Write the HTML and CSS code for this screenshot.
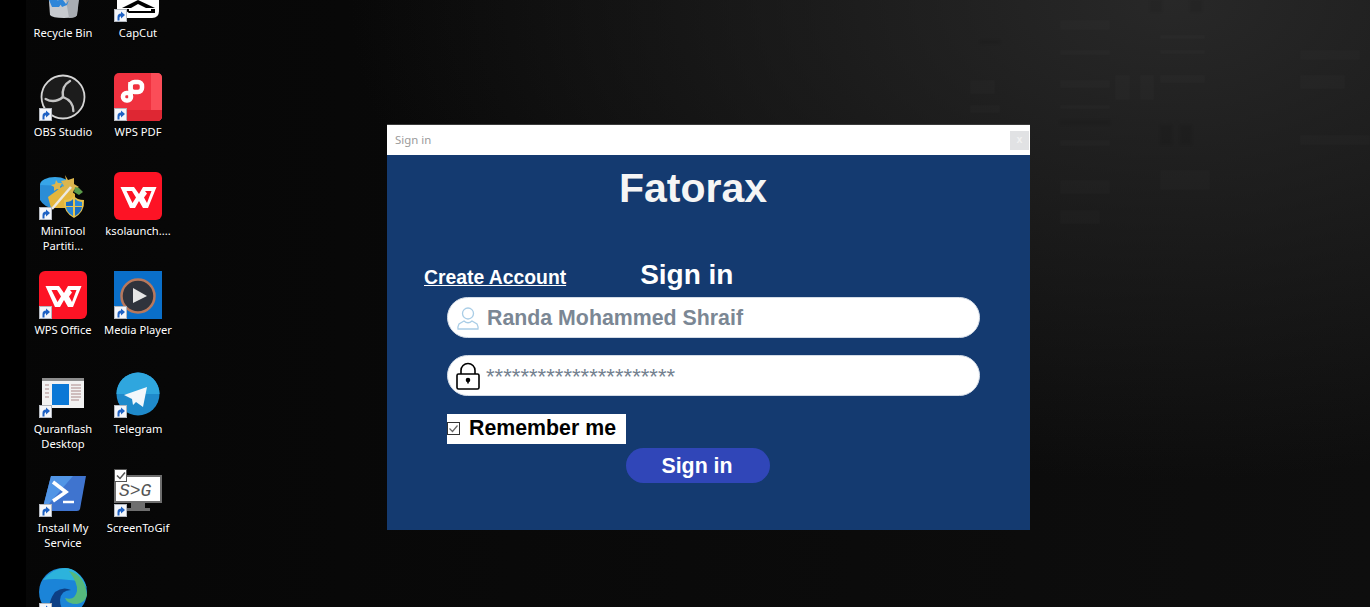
FILE: index.html
```html
<!DOCTYPE html>
<html lang="en">
<head>
<meta charset="utf-8">
<title>Sign in</title>
<link rel="stylesheet" href="styles.css">
</head>
<body>
<svg class="defs" width="0" height="0" aria-hidden="true">
  <symbol id="sc" viewBox="0 0 13 13">
    <rect x=".5" y=".5" width="12" height="12" fill="#f4f6fa" stroke="#b4b8bf"/>
    <path d="M3.500 11.500V8q0-3.500 3.500-3.500V2.500L11 6 7 9.500V7.200q-1.500 0-1.500 1.500v2.800z" fill="#1f62c4"/>
  </symbol>
  <symbol id="wps" viewBox="0 0 48 48">
    <rect width="48" height="48" rx="6" fill="#fd1325"/>
    <path d="M6.500 15H20l5 7 4-7h13.500L34 36h-5l-4-7-4 7h-5z" fill="#fff"/>
    <path d="M12.500 19H18l4 6.500-3.500 5.500zM31 19h6.500L33 31l-3-5.500 3-4z" fill="#fd1325"/>
  </symbol>
</svg>
<main class="desktop">
  <svg class="wallpaper-art" width="1370" height="607" viewBox="0 0 1370 607" aria-hidden="true">
    <g fill="#ffffff" opacity="0.016">
      <rect x="1060" y="20" width="50" height="10"/><rect x="1160" y="35" width="45" height="4"/><rect x="1160" y="50" width="45" height="4"/>
      <rect x="1060" y="50" width="50" height="5"/><rect x="1060" y="80" width="50" height="8"/><rect x="1115" y="75" width="15" height="25"/>
      <rect x="1140" y="75" width="14" height="25"/><rect x="1160" y="75" width="45" height="8"/><rect x="1060" y="105" width="50" height="4"/>
      <rect x="1060" y="140" width="50" height="6"/><rect x="970" y="80" width="25" height="14"/><rect x="970" y="105" width="30" height="8"/>
      <rect x="1300" y="50" width="60" height="10"/><rect x="1300" y="75" width="45" height="14"/><rect x="1060" y="180" width="50" height="14"/>
      <rect x="1160" y="170" width="50" height="20"/><rect x="1300" y="135" width="70" height="10"/><rect x="1060" y="210" width="40" height="14"/>
    </g>
    <g fill="#000000" opacity="0.07">
      <rect x="1060" y="120" width="50" height="5"/><rect x="1160" y="125" width="12" height="20"/><rect x="1180" y="125" width="12" height="20"/>
      <rect x="1150" y="0" width="12" height="12"/><rect x="1190" y="0" width="12" height="12"/><rect x="980" y="40" width="20" height="4"/>
    </g>
  </svg>

  <section class="icons">
    <figure class="icon">
      <svg class="tile" viewBox="0 0 48 48"><path d="M8 0h33l-3 41q-1 3-13 3t-14-3z" fill="#c7cacf"/><path d="M27 26h13l-2 15q-1 3-8 3z" fill="#a9adb3"/><path d="M10 26h8l5 3-3 4h-7zM19 26h5l3 4 3-4-2 5-5 2z" fill="#2e86d9"/></svg>
      <figcaption>Recycle Bin</figcaption>
    </figure>
    <figure class="icon">
      <svg class="tile" viewBox="0 0 48 48"><path d="M3 0h42v37q0 7-7 7H10q-7 0-7-7z" fill="#fff"/><path d="M24 26L8 34v0h33v0z" fill="#000"/><path d="M24 30l-7 4h15z" fill="#fff"/><path d="M9 35h32v4H15z" fill="#000"/><path d="M15 35h22v2H15z" fill="#fff"/></svg>
      <svg class="shortcut"><use href="#sc"/></svg>
      <figcaption>CapCut</figcaption>
    </figure>

    <figure class="icon">
      <svg class="tile" viewBox="0 0 48 48"><circle cx="24" cy="24" r="21.500" fill="#1c1c1c" stroke="#d6d6d6" stroke-width="1.800"/><g fill="none" stroke="#c4c4c4" stroke-width="2.400" stroke-linecap="round"><path d="M24 24C23 18 24 12 31 8"/><path d="M24 24C23 18 24 12 31 8" transform="rotate(120 24 24)"/><path d="M24 24C23 18 24 12 31 8" transform="rotate(240 24 24)"/></g></svg>
      <svg class="shortcut"><use href="#sc"/></svg>
      <figcaption>OBS Studio</figcaption>
    </figure>
    <figure class="icon">
      <svg class="tile" viewBox="0 0 48 48"><rect width="48" height="48" rx="5" fill="#f0313f"/><path d="M37 0h6q5 0 5 5v38q0 5-5 5h-6z" fill="#fb4d58"/><path d="M0 37h48v6q0 5-5 5H5q-5 0-5-5z" fill="#de2733"/><g fill="none" stroke="#fff" stroke-width="4.500"><rect x="16.500" y="9" width="11.500" height="10" rx="4"/><rect x="9" y="20" width="8" height="7.500" rx="3.500"/><path d="M16.500 9v16"/></g></svg>
      <svg class="shortcut"><use href="#sc"/></svg>
      <figcaption>WPS PDF</figcaption>
    </figure>

    <figure class="icon">
      <svg class="tile" viewBox="0 0 48 48"><ellipse cx="16" cy="13" rx="15" ry="8" fill="#37a5e8"/><path d="M1 13v15q4 7 13 8l12-22z" fill="#2a8dd6"/><path d="M9 25l15-11 12 8v14H12z" fill="#e4b63c"/><path d="M26 3l3 5 6-2 0 6 5 3-5 3-2 5-5-4-5 0 2-5-3-5 5-1zM17 8l2 3 4 0-2 4 1 3-4-1-3 2 0-4-3-2 4-1z" fill="#dcb64e"/><path d="M36 15l4 1 4 4-4 3-5-3z" fill="#5b9b4a"/><path d="M13 37L32 15" stroke="#ece9e2" stroke-width="2.500"/><path d="M25 28q7 0 10-4 3 4 10 4 1 12-10 18-11-6-10-18z" fill="#e8c34e"/><path d="M27 30q5 0 7-3v7h-7zM36 35h7q-1 6-7 9z" fill="#1b6ec2"/><path d="M36 27q3 3 7 3v4h-7zM27 35h7v9q-6-3-7-9z" fill="#2a87d8"/></svg>
      <svg class="shortcut"><use href="#sc"/></svg>
      <figcaption>MiniTool<br>Partiti...</figcaption>
    </figure>
    <figure class="icon">
      <svg class="tile" viewBox="0 0 48 48"><use href="#wps"/></svg>
      <figcaption>ksolaunch....</figcaption>
    </figure>

    <figure class="icon">
      <svg class="tile" viewBox="0 0 48 48"><use href="#wps"/></svg>
      <svg class="shortcut"><use href="#sc"/></svg>
      <figcaption>WPS Office</figcaption>
    </figure>
    <figure class="icon">
      <svg class="tile" viewBox="0 0 48 48"><rect width="48" height="48" fill="#0a6fc9"/><circle cx="24" cy="25" r="16.500" fill="#2f333c" stroke="#b8785c" stroke-width="2.500"/><path d="M19 17l14 8-14 7z" fill="#e6e6e6"/></svg>
      <svg class="shortcut"><use href="#sc"/></svg>
      <figcaption>Media Player</figcaption>
    </figure>

    <figure class="icon">
      <svg class="tile" viewBox="0 0 48 48"><rect x="3" y="8" width="42" height="30" fill="#f2f2f2"/><rect x="3" y="8" width="42" height="3" fill="#8d8d8d"/><rect x="13" y="14" width="17" height="21" fill="#0b78d6"/><path d="M32 15h10M32 18h10M32 21h10M32 24h10M32 27h10M32 30h8M6 15h4M6 19h4M6 23h4M6 27h4" stroke="#a88" stroke-width="1"/></svg>
      <svg class="shortcut"><use href="#sc"/></svg>
      <figcaption>Quranflash<br>Desktop</figcaption>
    </figure>
    <figure class="icon">
      <svg class="tile" viewBox="0 0 48 48"><circle cx="24" cy="24" r="21.500" fill="#1f8acb"/><path d="M2.500 24a21.500 21.500 0 0 1 43 0z" fill="#2fa6de"/><path d="M10 25l23-8-4 20-7-5-3 3-1-6z" fill="#f2f7fb"/></svg>
      <svg class="shortcut"><use href="#sc"/></svg>
      <figcaption>Telegram</figcaption>
    </figure>

    <figure class="icon">
      <svg class="tile" viewBox="0 0 48 48"><path d="M12 7h35l-6 33q-.5 2-3 2H3z" fill="#3f74cf"/><path d="M12 7h22L9 36l-6 6z" fill="#5195e6"/><path d="M14 13l13 10-13 9" fill="none" stroke="#fff" stroke-width="3.500"/><path d="M24 33h11" stroke="#fff" stroke-width="2.500"/></svg>
      <svg class="shortcut"><use href="#sc"/></svg>
      <figcaption>Install My<br>Service</figcaption>
    </figure>
    <figure class="icon">
      <svg class="tile" viewBox="0 0 48 48"><rect y="6" width="48" height="28" fill="#6e6e6e"/><rect x="2" y="8" width="44" height="24" fill="#fff"/><rect x="17" y="34" width="14" height="5" fill="#6e6e6e"/><rect x="9" y="39" width="27" height="3" fill="#6e6e6e"/><rect x=".5" y=".5" width="12" height="12" fill="#fff" stroke="#555"/><path d="M3 6.500l3 3 5-6" fill="none" stroke="#555" stroke-width="1.500"/><text class="sg-text" x="5" y="27">S&gt;G</text></svg>
      <svg class="shortcut"><use href="#sc"/></svg>
      <figcaption>ScreenToGif</figcaption>
    </figure>

    <figure class="icon">
      <svg class="tile" viewBox="0 0 48 48"><circle cx="24" cy="24" r="24" fill="#1b84d8"/><path d="M4 12Q14 0 26 0q14 0 22 20-6-8-18-8Q14 10 4 12z" fill="#2cb3dc"/><path d="M30 3q16 4 18 24-2 8-10 9-10 0-12-6 10 3 12-7 1-8-8-20z" fill="#55b97d"/><path d="M14 48q-8-10 2-24 8-6 16-2-10 0-11 10 0 8 7 16z" fill="#0d3f85"/></svg>
      <svg class="shortcut"><use href="#sc"/></svg>
    </figure>
  </section>

  <section class="window" aria-label="Sign in">
    <header class="titlebar">
      <span class="titlebar-text">Sign in</span>
      <button class="close" type="button">x</button>
    </header>
    <div class="window-body">
      <h1 class="brand">Fatorax</h1>
      <div class="heading-row">
        <a class="create-link">Create Account</a>
        <h2 class="form-title">Sign in</h2>
      </div>
      <div class="fields">
        <div class="field">
          <svg class="user-icon" width="24" height="24" viewBox="0 0 24 24" fill="none" stroke="#a9cde6" stroke-width="1.300"><circle cx="12" cy="7.500" r="5.500"/><path d="M2 23q-.5-2 1-5l5-3q4 3.500 8 0l5 3q1.500 3 1 5z"/></svg>
          <span class="field-text">Randa Mohammed Shraif</span>
        </div>
        <div class="field">
          <svg class="lock-icon" width="24" height="28" viewBox="0 0 24 28" fill="none" stroke="#000" stroke-width="1.600"><path d="M5 12V8.500a7 7 0 0 1 14 0V12"/><rect x="1" y="12" width="22" height="15" rx="1.500"/><circle cx="12" cy="18" r="1.500" fill="#000"/><path d="M12 18v3.500"/></svg>
          <span class="field-stars">**********************</span>
        </div>
      </div>
      <label class="remember">
        <svg class="check" width="13" height="13" viewBox="0 0 13 13" fill="none"><rect x=".5" y=".5" width="12" height="12" stroke="#333"/><path d="M2.500 6.500l3 3 5-6" stroke="#666" stroke-width="1.200"/></svg>
        <span>Remember me</span>
      </label>
      <button class="submit" type="button">Sign in</button>
    </div>
  </section>
</main>
</body>
</html>
```

FILE: styles.css
```css
* { box-sizing: border-box; }

html, body {
  margin: 0;
  height: 100%;
  overflow: hidden;
}

.defs {
  position: absolute;
}

.desktop {
  position: relative;
  width: 1370px;
  height: 607px;
  overflow: hidden;
  background:
    linear-gradient(90deg, #000 0, #000 26px, rgba(0,0,0,0) 26px),
    radial-gradient(ellipse 820px 480px at 1170px 0, #282828 0%, rgba(40,40,40,0) 100%),
    linear-gradient(90deg, #060606 0%, #0a0a0a 50%, #0e0e0e 100%);
  font-family: "Liberation Sans", Arial, sans-serif;
}

.wallpaper-art {
  position: absolute;
  inset: 0;
  filter: blur(1px);
}

.icons {
  position: absolute;
  left: 25.500px;
  top: -26px;
  display: grid;
  grid-template-columns: 75px 75px;
  grid-auto-rows: 99px;
}

.icon {
  position: relative;
  margin: 0;
  display: flex;
  flex-direction: column;
  align-items: center;
  color: #fff;
}

.tile {
  width: 48px;
  height: 48px;
  flex: none;
  overflow: visible;
}

.sg-text {
  font-family: "Liberation Mono", monospace;
  font-style: italic;
  font-size: 18px;
  fill: #555;
}

.shortcut {
  position: absolute;
  left: 13.500px;
  top: 35px;
  width: 13px;
  height: 13px;
}

.icon figcaption {
  margin-top: 3px;
  width: 75px;
  text-align: center;
  font-family: "Noto Sans", "Open Sans", sans-serif;
  font-size: 11.200px;
  line-height: 15px;
  white-space: nowrap;
  text-shadow: 0 1px 1px rgba(0,0,0,.8);
}

.window {
  position: absolute;
  left: 387px;
  top: 125px;
  width: 643px;
  height: 405px;
  display: flex;
  flex-direction: column;
  box-shadow: 0 -1px 0 #3a3a3a;
}

.titlebar {
  flex: none;
  height: 30px;
  display: flex;
  align-items: center;
  justify-content: space-between;
  padding: 0 1px 0 8px;
  background: #fff;
}

.titlebar-text {
  font-family: "Noto Sans", "Open Sans", sans-serif;
  font-size: 11.400px;
  line-height: 14px;
  margin-top: -1px;
  color: #9a9a9a;
}

.close {
  width: 19px;
  height: 19px;
  padding: 0;
  border: 0;
  background: #e1e2e4;
  color: #f2f2f2;
  font: bold 10px "Liberation Mono", monospace;
}

.window-body {
  flex: 1;
  display: flex;
  flex-direction: column;
  background: #143a70;
  color: #fff;
}

.brand {
  margin: 10px 0 0;
  padding-left: 232px;
  font-size: 41px;
  line-height: 47px;
  font-weight: 700;
  color: #f5f5f5;
}

.heading-row {
  display: flex;
  align-items: flex-end;
  margin-top: 47px;
  padding-left: 37px;
}

.create-link {
  font-size: 19.330px;
  line-height: 24px;
  font-weight: 700;
  text-decoration: underline;
  margin-bottom: 1px;
}

.form-title {
  margin: 0 0 0 74px;
  font-size: 28px;
  line-height: 32px;
  font-weight: 700;
}

.fields {
  display: flex;
  flex-direction: column;
  gap: 17px;
  margin: 6px 0 0 60px;
  width: 533px;
}

.field {
  height: 41px;
  display: flex;
  align-items: center;
  gap: 7px;
  padding-left: 8px;
  background: #fff;
  border: 1px solid #d3dbe6;
  border-radius: 21px;
  color: #7b8794;
}

.user-icon, .lock-icon {
  flex: none;
}

.field-text {
  font-size: 21.330px;
  font-weight: 700;
  padding-top: 2px;
}

.field-stars {
  font-size: 22.100px;
  line-height: 21px;
  font-weight: 400;
  height: 19px;
  margin-left: -1px;
  color: #74818f;
}

.remember {
  align-self: flex-start;
  height: 30px;
  margin: 18px 0 0 60px;
  padding-bottom: 2px;
  width: 179px;
  display: flex;
  align-items: center;
  gap: 9px;
  background: #fff;
  color: #000;
  font-size: 21.330px;
  font-weight: 700;
}

.check {
  flex: none;
}

.submit {
  align-self: flex-start;
  width: 144px;
  height: 35px;
  margin: 4px 0 0 239px;
  padding: 2px 2px 0 0;
  border: 0;
  border-radius: 18px;
  background: #3046b8;
  color: #fff;
  font: 700 21.330px "Liberation Sans", Arial, sans-serif;
}
```
